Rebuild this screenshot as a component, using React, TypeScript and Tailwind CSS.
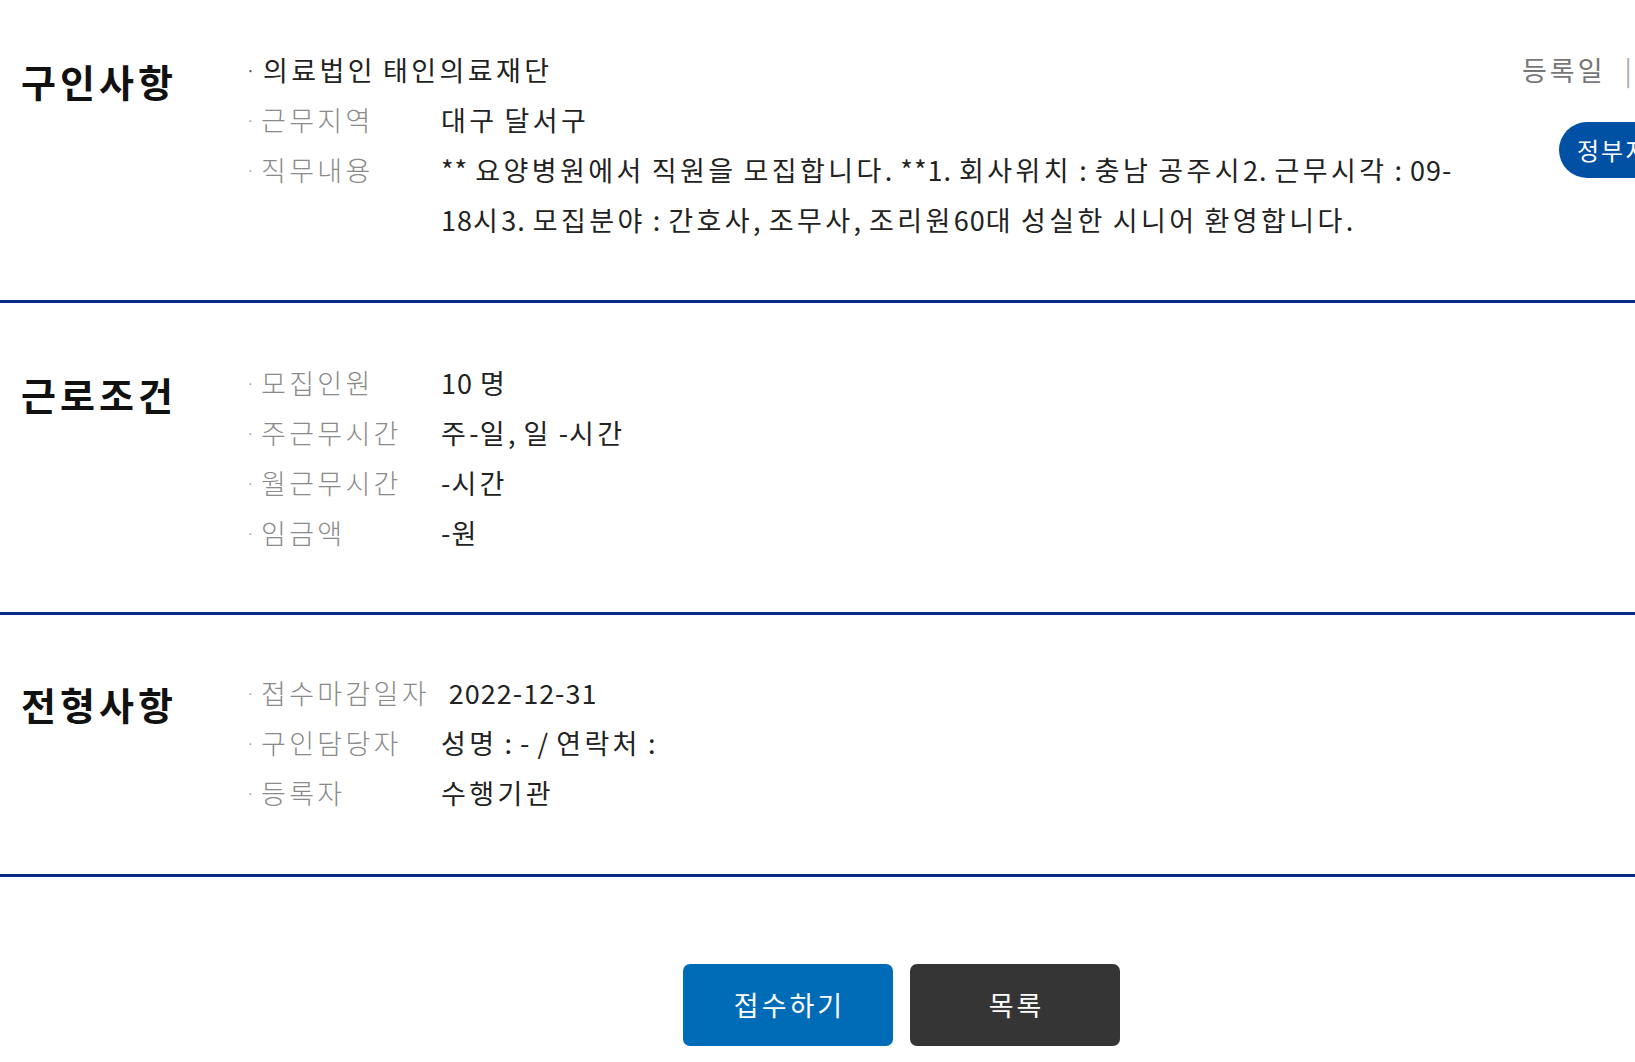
import type { ReactNode } from "react"

type Row = { label?: string; value: string[] }

const jobRows: Row[] = [
  { value: ["의료법인 태인의료재단"] },
  { label: "근무지역", value: ["대구 달서구"] },
  {
    label: "직무내용",
    value: [
      "** 요양병원에서 직원을 모집합니다. **1. 회사위치 : 충남 공주시2. 근무시각 : 09-",
      "18시3. 모집분야 : 간호사, 조무사, 조리원60대 성실한 시니어 환영합니다.",
    ],
  },
]

const workRows: Row[] = [
  { label: "모집인원", value: ["10 명"] },
  { label: "주근무시간", value: ["주-일, 일 -시간"] },
  { label: "월근무시간", value: ["-시간"] },
  { label: "임금액", value: ["-원"] },
]

const selectRows: Row[] = [
  { label: "접수마감일자", value: ["2022-12-31"] },
  { label: "구인담당자", value: ["성명 : - / 연락처 :"] },
  { label: "등록자", value: ["수행기관"] },
]

// hangul runs get wider spacing so the text widths match the original font
function Spaced({ text }: { text: string }) {
  return (
    <>
      {text.split(/([가-힣]+)/).map((part, i) =>
        /[가-힣]/.test(part) ? (
          <span key={i} className="tracking-[3.4px]">{part}</span>
        ) : (
          <span key={i} className="tracking-[1px]">{part}</span>
        )
      )}
    </>
  )
}

function InfoList({ rows }: { rows: Row[] }) {
  return (
    <ul className="flex flex-col">
      {rows.map((row, i) => {
        const value = row.value.map((line, j) => (
          <span key={j} className="block">
            <Spaced text={line} />
          </span>
        ))
        return row.label ? (
          <li key={i} className="flex text-[27px] leading-[50px] whitespace-nowrap">
            <span className="flex min-w-[174px] shrink-0 text-[#8a8a8a] font-light tracking-[3.3px]">
              <span className="w-[15px] -ml-[2px] text-[16px] text-[#999]">·</span>
              {row.label}
            </span>
            <span className="ml-[19px] text-[#222]">{value}</span>
          </li>
        ) : (
          <li key={i} className="flex text-[27px] leading-[50px] text-[#222] whitespace-nowrap">
            <span className="w-[17px] -ml-[2px] text-[16px] text-[#555]">·</span>
            <span>{value}</span>
          </li>
        )
      })}
    </ul>
  )
}

function Section({
  title,
  rows,
  aside,
  className,
}: {
  title: string
  rows: Row[]
  aside?: ReactNode
  className: string
}) {
  return (
    <section className={`flex pl-[21px] border-b-[3px] border-[#06298a] ${className}`}>
      <h2 className="w-[227px] shrink-0 mt-[13px] text-[38px] leading-[46px] font-bold tracking-[4px] text-[#111]">
        {title}
      </h2>
      <div className="flex-1 min-w-0">
        <InfoList rows={rows} />
      </div>
      {aside}
    </section>
  )
}

export default function App() {
  return (
    <div className="w-full min-h-[1062px] overflow-hidden bg-white font-['Noto_Sans_CJK_KR','Noto_Sans',sans-serif]">
      <div className="w-[1803px]">
        <Section
          title="구인사항"
          rows={jobRows}
          className="pt-[45px] pb-[55px]"
          aside={
            <div className="w-[281px] shrink-0 flex flex-col items-start">
              <div className="text-[27px] leading-[50px] text-[#777] whitespace-nowrap">
                <span className="tracking-[3px]">등록일</span>
                <span className="mx-[19px] text-[#aaa]">|</span>2022-12-01
              </div>
              <span className="mt-[27px] ml-[37px] h-[56px] px-[18px] rounded-full bg-[#0050a4] text-white text-[24px] leading-[56px] tracking-[2px] whitespace-nowrap">
                정부지원일자리
              </span>
            </div>
          }
        />
        <Section title="근로조건" rows={workRows} className="pt-[55px] pb-[54px]" />
        <Section title="전형사항" rows={selectRows} className="pt-[53px] pb-[56px]" />
        <div className="flex justify-center gap-[17px] pt-[87px] pb-[17px]">
          <button className="w-[210px] h-[82px] rounded-[7px] bg-[#006cb8] text-white text-[27px] tracking-[3px] indent-[3px]">
            접수하기
          </button>
          <button className="w-[210px] h-[82px] rounded-[7px] bg-[#353535] text-white text-[27px] tracking-[3px] indent-[3px]">
            목록
          </button>
        </div>
      </div>
    </div>
  )
}
